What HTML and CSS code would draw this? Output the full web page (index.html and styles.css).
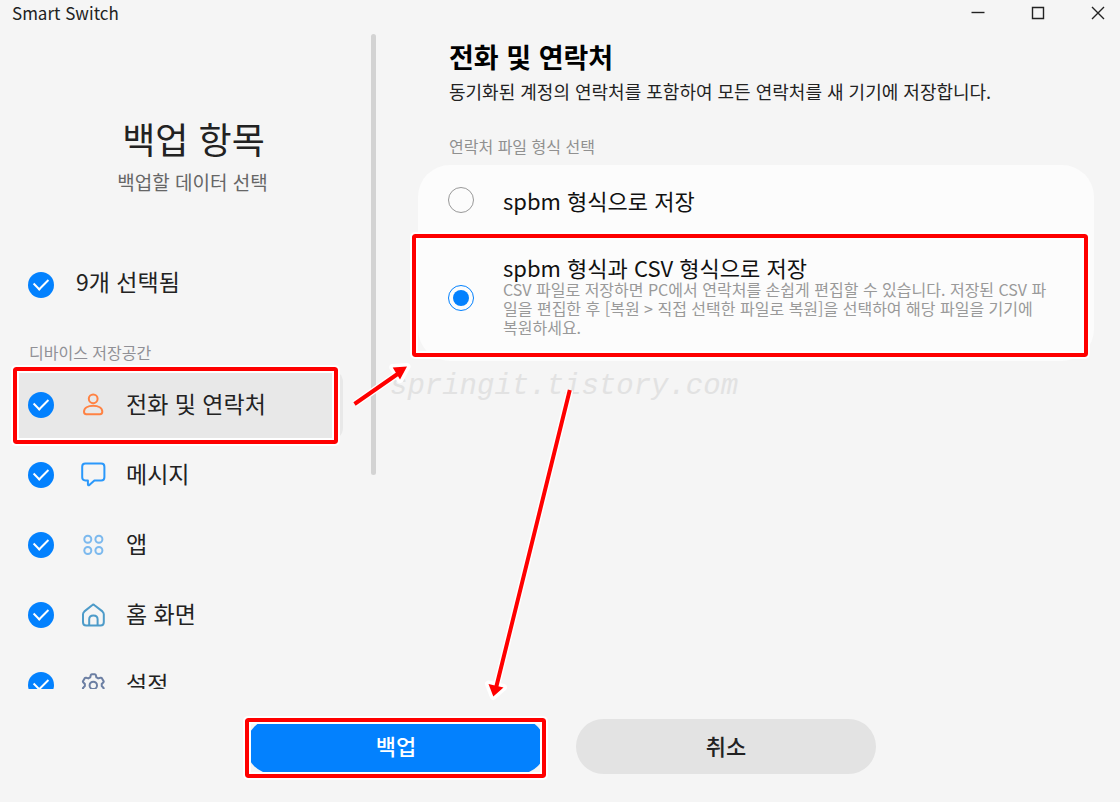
FILE: index.html
```html
<!DOCTYPE html>
<html lang="ko">
<head>
<meta charset="utf-8">
<meta name="viewport" content="width=device-width, initial-scale=1">
<title>Smart Switch</title>
<link rel="stylesheet" href="styles.css">
</head>
<body>
<div class="window">
  <header class="titlebar">
    <span class="app-name">Smart Switch</span>
    <div class="window-controls">
      <button class="window-button" type="button" aria-label="최소화"><svg viewBox="0 0 14 14"><path d="M0.5 6.5H13.5"/></svg></button>
      <button class="window-button" type="button" aria-label="최대화"><svg viewBox="0 0 14 14"><path d="M1.5 1.5H12.5V12.5H1.5Z"/></svg></button>
      <button class="window-button" type="button" aria-label="닫기"><svg viewBox="0 0 14 14"><path d="M1 1L13 13M13 1L1 13"/></svg></button>
    </div>
  </header>

  <div class="body">
    <aside class="sidebar">
      <div class="sidebar-content">
        <div class="sidebar-head">
          <h1 class="sidebar-title">백업 항목</h1>
          <p class="sidebar-subtitle">백업할 데이터 선택</p>
        </div>
        <label class="row row-all">
          <input class="check" type="checkbox" checked>
          <span class="row-label">9개 선택됨</span>
        </label>
        <p class="section-label">디바이스 저장공간</p>
        <label class="row row-selected marked">
          <input class="check" type="checkbox" checked>
          <svg class="icon icon-person" viewBox="0 0 26 26"><circle cx="13.2" cy="6.8" r="4.4"/><path d="M6.3 22.2H20Q22.3 22.2 22.3 19.8C22.3 16 18.3 13.8 13.2 13.8S4 16 4 19.8Q4 22.2 6.3 22.2Z"/></svg>
          <span class="row-label">전화 및 연락처</span>
        </label>
        <label class="row">
          <input class="check" type="checkbox" checked>
          <svg class="icon icon-message" viewBox="0 0 26 26"><path d="M5.3 1.6H21.2Q24.4 1.6 24.4 4.8V15.2Q24.4 18.4 21.2 18.4H14.4L9.6 22.8Q7.9 23.9 7.9 22.2V18.4H5.3Q2.2 18.4 2.2 15.2V4.8Q2.2 1.6 5.3 1.6Z"/></svg>
          <span class="row-label">메시지</span>
        </label>
        <label class="row">
          <input class="check" type="checkbox" checked>
          <svg class="icon icon-apps" viewBox="0 0 26 26"><circle cx="7.8" cy="7.3" r="3.5"/><circle cx="18.9" cy="7.3" r="3.5"/><circle cx="7.8" cy="18.5" r="3.5"/><circle cx="18.9" cy="18.5" r="3.5"/></svg>
          <span class="row-label">앱</span>
        </label>
        <label class="row">
          <input class="check" type="checkbox" checked>
          <svg class="icon icon-home" viewBox="0 0 26 26"><path d="M12.1 3.2Q13.3 2.1 14.5 3.2L22.4 9.4Q23.8 10.6 23.8 12.2V20.2Q23.8 23.4 20.6 23.4H6.2Q3 23.4 3 20.2V12.2Q3 10.6 4.4 9.4Z"/><path d="M9.2 23.2V17.2Q9.2 13.4 13.4 13.4T17.6 17.2V23.2"/></svg>
          <span class="row-label">홈 화면</span>
        </label>
        <label class="row">
          <input class="check" type="checkbox" checked>
          <svg class="icon icon-settings" viewBox="0 0 26 26"><path d="M10.2 5.4L10.8 3Q11 2.2 11.8 2.2H14.8Q15.6 2.2 15.8 3L16.4 5.4Q17.4 5.8 18.3 6.4L20.5 5.8Q21.5 5.6 22 6.4L23.5 9Q24 9.9 23.2 10.5L21.7 12Q21.8 13 21.7 14L23.2 15.5Q24 16.1 23.5 17L22 19.6Q21.5 20.4 20.5 20.2L18.3 19.6Q17.4 20.2 16.4 20.6L15.8 23Q15.6 23.8 14.8 23.8H11.8Q11 23.8 10.8 23L10.2 20.6Q9.2 20.2 8.3 19.6L6.1 20.2Q5.1 20.4 4.6 19.6L3.1 17Q2.6 16.1 3.4 15.5L4.9 14Q4.8 13 4.9 12L3.4 10.5Q2.6 9.9 3.1 9L4.6 6.4Q5.1 5.6 6.1 5.8L8.3 6.4Q9.2 5.8 10.2 5.4Z"/><circle cx="13.3" cy="13.4" r="3.7"/></svg>
          <span class="row-label">설정</span>
        </label>
      </div>
      <div class="scrollbar"></div>
    </aside>

    <main class="main">
      <div class="intro">
        <h2 class="detail-title">전화 및 연락처</h2>
        <p class="detail-text">동기화된 계정의 연락처를 포함하여 모든 연락처를 새 기기에 저장합니다.</p>
        <p class="group-label" id="format-label">연락처 파일 형식 선택</p>
      </div>
      <div class="card" role="radiogroup" aria-labelledby="format-label">
        <label class="option">
          <input class="radio" type="radio" name="format">
          <span class="option-title">spbm 형식으로 저장</span>
        </label>
        <label class="option option-tall marked">
          <input class="radio" type="radio" name="format" checked>
          <span class="option-body">
            <span class="option-title">spbm 형식과 CSV 형식으로 저장</span>
            <span class="option-note">CSV 파일로 저장하면 PC에서 연락처를 손쉽게 편집할 수 있습니다. 저장된 CSV 파<br>일을 편집한 후 [복원 &gt; 직접 선택한 파일로 복원]을 선택하여 해당 파일을 기기에<br>복원하세요.</span>
          </span>
        </label>
      </div>
    </main>
  </div>

  <footer class="footer">
    <button class="action action-primary marked" type="button">백업</button>
    <button class="action" type="button">취소</button>
  </footer>

  <div class="watermark">springit.tistory.com</div>
  <svg class="arrows" width="1120" height="802" viewBox="0 0 1120 802" aria-hidden="true">
    <g class="arrow-halo">
      <path d="M354.5 404L399 373M569.8 390L496 688"/>
      <path d="M407 366.5L392.7 367.5L400 379.5ZM493.3 696.5L488.5 684L503.5 687.5Z"/>
    </g>
    <path class="arrow-line" d="M354.5 404L399 373M569.8 390L496 688"/>
    <path class="arrow-head" d="M407 366.5L392.7 367.5L400 379.5ZM493.3 696.5L488.5 684L503.5 687.5Z"/>
  </svg>
</div>
</body>
</html>
```
FILE: styles.css
```css
* {
  box-sizing: border-box;
}

body {
  margin: 0;
  background: #f5f5f5;
  color: #222;
  font-family: "Noto Sans CJK KR", sans-serif;
}

h1, h2, p {
  margin: 0;
  font-weight: 400;
}

button {
  border: 0;
  background: none;
  color: inherit;
  font-family: inherit;
}

.window {
  position: relative;
  display: flex;
  flex-direction: column;
  height: 100vh;
  overflow: hidden;
}

.titlebar {
  display: flex;
  flex: none;
  align-items: flex-start;
  justify-content: space-between;
  height: 34px;
  padding-left: 12px;
}

.app-name {
  font-size: 17px;
  line-height: 26px;
}

.window-controls {
  display: flex;
  gap: 16px;
}

.window-button {
  display: flex;
  align-items: center;
  justify-content: center;
  width: 44px;
  height: 26px;
  padding: 0;
}

.window-button svg {
  width: 14px;
  height: 14px;
  fill: none;
  stroke: #222;
  stroke-width: 1.4;
}

.body {
  display: flex;
  flex: 1;
  min-height: 0;
}

/* Backup item list */
.sidebar {
  display: flex;
  flex: 0 0 376px;
  overflow: hidden;
}

.sidebar-content {
  flex: 1;
  padding: 80px 28px 0 14px;
}

.sidebar-head {
  padding-bottom: 54px;
  text-align: center;
}

.sidebar-title {
  padding: 0 0 6px 30px;
  font-size: 36px;
  line-height: 48px;
}

.sidebar-subtitle {
  padding-left: 28px;
  color: #666;
  font-size: 19px;
  line-height: 28px;
}

.row {
  position: relative;
  display: flex;
  align-items: center;
  height: 70px;
  padding-left: 14px;
}

.row-all {
  gap: 22px;
}

.row-selected {
  border-radius: 0 12px 12px 0;
  background: #e8e8e8;
}

.row-label {
  padding-bottom: 4px;
  font-size: 23px;
  line-height: 32px;
}

.row-all .row-label {
  padding-bottom: 8px;
}

.section-label {
  padding: 20px 0 6px 15px;
  color: #909096;
  font-size: 16px;
  line-height: 24px;
}

.check {
  display: grid;
  flex: none;
  place-items: center;
  width: 26px;
  height: 26px;
  margin: 0;
  border-radius: 50%;
  appearance: none;
  background: #0381fe;
}

.check::before {
  width: 12px;
  height: 7px;
  margin-bottom: 6px;
  border: solid #fff;
  border-width: 0 0 2px 2px;
  content: "";
  transform: rotate(-45deg);
}

.icon {
  flex: none;
  width: 26px;
  height: 26px;
  margin: 0 20px 0 26px;
  fill: none;
  stroke-width: 2;
  stroke-linejoin: round;
}

.icon-person { stroke: #ff8243; }
.icon-message { stroke: #2a98fb; }
.icon-apps { stroke: #7cb9ee; }
.icon-home { stroke: #4d9bc9; }
.icon-settings { stroke: #6c7fa3; }

.scrollbar {
  width: 5px;
  height: 67.4%;
  border-radius: 3px;
  background: #d3d3d3;
}

/* Detail pane */
.main {
  flex: 1;
  padding: 3px 26px 0 42px;
}

.intro {
  padding-left: 31px;
}

.detail-title {
  color: #000;
  font-size: 27px;
  font-weight: 700;
  line-height: 40px;
}

.detail-text {
  font-size: 18px;
  line-height: 28px;
}

.group-label {
  padding: 29px 0 7px;
  color: #909090;
  font-size: 16px;
  line-height: 24px;
}

.card {
  border-radius: 32px;
  background: #fcfcfc;
}

.option {
  position: relative;
  display: flex;
  align-items: center;
  gap: 29px;
  min-height: 70px;
  padding-left: 30px;
}

.option-tall {
  min-height: 126px;
}

.option-body {
  display: flex;
  flex-direction: column;
  padding-bottom: 4px;
}

.option-title {
  color: #111;
  font-size: 22px;
  line-height: 25px;
}

.option-note {
  color: #999;
  font-size: 16px;
  line-height: 19px;
  white-space: nowrap;
}

.radio {
  display: grid;
  flex: none;
  place-items: center;
  width: 26px;
  height: 26px;
  margin: 0;
  border: 1px solid #999;
  border-radius: 50%;
  appearance: none;
}

.radio:checked {
  border-color: #0381fe;
}

.radio:checked::before {
  width: 16px;
  height: 16px;
  border-radius: 50%;
  background: #0381fe;
  content: "";
}

/* Actions */
.footer {
  display: flex;
  flex: none;
  justify-content: center;
  gap: 30px;
  padding: 30px 0 28px 2px;
}

.action {
  position: relative;
  width: 300px;
  height: 55px;
  padding: 0 0 4px;
  border-radius: 28px;
  background: #e3e3e3;
  font-size: 22px;
  font-weight: 500;
}

.action-primary {
  background: #0381fe;
  color: #fff;
}

/* Red call-out frames */
.marked::after {
  position: absolute;
  border: 4px solid #f00;
  border-radius: 3px;
  outline: 2px solid #fff;
  box-shadow: inset 0 0 0 2px #fff;
  content: "";
  pointer-events: none;
}

.row-selected::after {
  inset: -3px 5px -4px -1px;
}

.option-tall::after {
  inset: -1px 6px 4px -6px;
}

.action-primary::after {
  inset: -1px 0 -4px -1px;
}

.watermark {
  position: absolute;
  top: 369px;
  left: 390px;
  color: #e2e2e2;
  font-family: "Liberation Mono", monospace;
  font-size: 29px;
  font-style: italic;
  line-height: 36px;
  pointer-events: none;
}

.arrows {
  position: absolute;
  top: 0;
  left: 0;
  pointer-events: none;
}

.arrow-halo {
  fill: #fff;
  stroke: #fff;
  stroke-width: 7;
  stroke-linejoin: round;
}

.arrow-line {
  stroke: #f00;
  stroke-width: 4;
}

.arrow-head {
  fill: #f00;
}
```
